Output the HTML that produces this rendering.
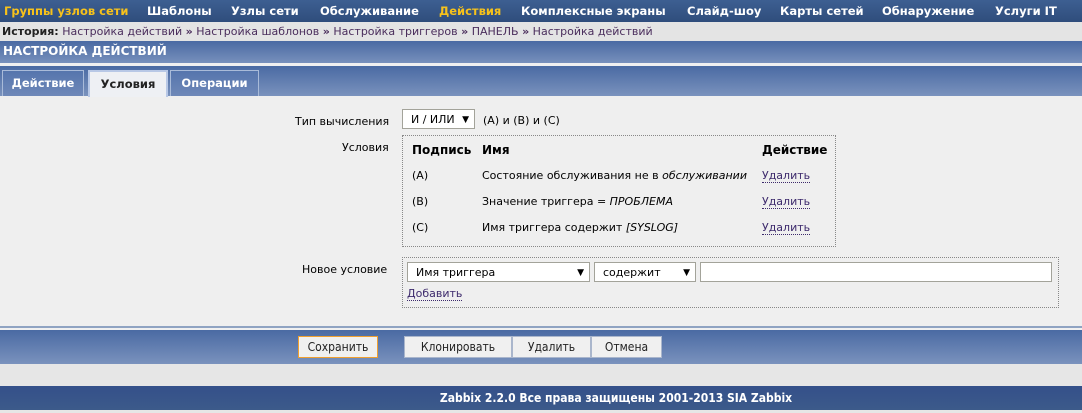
<!DOCTYPE html><html><head><meta charset="utf-8"><style>
body{margin:0;width:1082px;height:413px;overflow:hidden;background:#efefef;font-family:Verdana,"DejaVu Sans","Liberation Sans",sans-serif;font-size:11px;color:#000;position:relative}
.a{position:absolute}
.nav{top:0;left:0;width:1082px;height:22px;background:linear-gradient(#3d5f92,#2f4d7c);}
.nav span{position:absolute;top:4px;color:#fff;font-weight:bold;font-size:11.5px}
.hist{top:22px;left:0;width:1082px;height:19px;background:#e4e4e4;color:#4a2d5c;font-size:11px}
.blue{background:linear-gradient(#4a6aa3,#7a92bd)}
.tab{position:absolute;top:70px;height:25px;border:1px solid #a9bbd9;border-bottom:none;color:#fff;font-weight:bold;font-size:11.5px;line-height:25px;text-align:center;background:linear-gradient(#5575ad,#6e88b8)}
.sel{position:absolute;border:1px solid #a3a39a;background:#fff;height:20px;font-size:11px;line-height:20px;padding-left:8px;box-sizing:border-box}
.lnk{color:#3d2a6c;border-bottom:1px dotted #3d2a6c}
.btn{position:absolute;top:336px;height:22px;background:#f0f0f0;border:1px solid #aab6cc;box-sizing:border-box;text-align:center;line-height:20px;font-family:"DejaVu Sans Condensed","Liberation Sans Narrow","Liberation Sans",sans-serif;font-size:12px;color:#222}
</style></head><body>
<div class="a nav">
<span style="left:4px;color:#f7c21b">Группы узлов сети</span>
<span style="left:147px">Шаблоны</span>
<span style="left:231px">Узлы сети</span>
<span style="left:320px">Обслуживание</span>
<span style="left:439px;color:#f7c21b">Действия</span>
<span style="left:521px">Комплексные экраны</span>
<span style="left:687px">Слайд-шоу</span>
<span style="left:780px">Карты сетей</span>
<span style="left:882px">Обнаружение</span>
<span style="left:995px">Услуги IT</span>
</div>
<div class="a hist"><div style="position:absolute;left:2px;top:3px"><b style="color:#222">История:</b> Настройка действий <b>»</b> Настройка шаблонов <b>»</b> Настройка триггеров <b>»</b> ПАНЕЛЬ <b>»</b> Настройка действий</div></div>
<div class="a blue" style="top:41px;left:0;width:1082px;height:23px;color:#fff;font-weight:bold;font-size:12px;line-height:21px;padding-left:3px;box-sizing:border-box">НАСТРОЙКА ДЕЙСТВИЙ</div>
<div class="a" style="top:63px;left:0;width:1082px;height:3px;background:#f0f0f0"></div>
<div class="a blue" style="top:66px;left:0;width:1082px;height:30px"></div>
<div class="tab" style="left:2px;width:80px">Действие</div>
<div class="tab" style="left:88px;width:76px;background:#eef0f4;color:#222;border:2px solid #b8c8e6;border-bottom:none">Условия</div>
<div class="tab" style="left:170px;width:87px">Операции</div>

<div class="a" style="left:295px;top:115px">Тип вычисления</div>
<div class="sel" style="left:402px;top:109px;width:73px">И / ИЛИ <span style="position:absolute;right:5px;font-size:9px">▼</span></div>
<div class="a" style="left:483px;top:114px">(A) и (B) и (C)</div>
<div class="a" style="left:342px;top:141px">Условия</div>
<div class="a" style="left:402px;top:135px;width:434px;height:112px;border:1px dotted #888;box-sizing:border-box"></div>
<div class="a" style="left:412px;top:143px;font-weight:bold;font-size:12px">Подпись</div>
<div class="a" style="left:482px;top:143px;font-weight:bold;font-size:12px">Имя</div>
<div class="a" style="left:762px;top:143px;font-weight:bold;font-size:12px">Действие</div>
<div class="a" style="left:412px;top:169px">(A)</div><div class="a" style="left:482px;top:169px">Состояние обслуживания не в <i>обслуживании</i></div><div class="a lnk" style="left:762px;top:169px">Удалить</div>
<div class="a" style="left:412px;top:195px">(B)</div><div class="a" style="left:482px;top:195px">Значение триггера = <i>ПРОБЛЕМА</i></div><div class="a lnk" style="left:762px;top:195px">Удалить</div>
<div class="a" style="left:412px;top:221px">(C)</div><div class="a" style="left:482px;top:221px">Имя триггера содержит <i>[SYSLOG]</i></div><div class="a lnk" style="left:762px;top:221px">Удалить</div>
<div class="a" style="left:302px;top:263px">Новое условие</div>
<div class="a" style="left:402px;top:257px;width:657px;height:51px;border:1px dotted #888;box-sizing:border-box"></div>
<div class="sel" style="left:407px;top:262px;width:183px">Имя триггера<span style="position:absolute;right:5px;font-size:9px">▼</span></div>
<div class="sel" style="left:594px;top:262px;width:102px">содержит<span style="position:absolute;right:5px;font-size:9px">▼</span></div>
<div class="sel" style="left:700px;top:262px;width:352px"></div>
<div class="a lnk" style="left:407px;top:287px">Добавить</div>

<div class="a" style="top:326px;left:0;width:1082px;height:2px;background:#8fa3c2"></div>
<div class="a" style="top:328px;left:0;width:1082px;height:2px;background:#f0f0f0"></div>
<div class="a blue" style="top:330px;left:0;width:1082px;height:34px"></div>
<div class="btn" style="left:298px;width:80px;border:1px solid #f0a030">Сохранить</div>
<div class="btn" style="left:404px;width:108px">Клонировать</div>
<div class="btn" style="left:512px;width:79px">Удалить</div>
<div class="btn" style="left:591px;width:71px">Отмена</div>
<div class="a" style="top:364px;left:0;width:1082px;height:22px;background:#e6e6e6"></div>
<div class="a" style="top:386px;left:0;width:1082px;height:24px;background:linear-gradient(#34508a,#3c5a8a);color:#fff;font-weight:bold;text-align:center;line-height:24px;font-family:'DejaVu Sans Condensed','Liberation Sans Narrow',sans-serif;font-size:12px;padding-left:150px;box-sizing:border-box">Zabbix 2.2.0 Все права защищены 2001-2013 SIA Zabbix</div>
<div class="a" style="top:410px;left:0;width:1082px;height:3px;background:#e6e6e6"></div>
</body></html>
